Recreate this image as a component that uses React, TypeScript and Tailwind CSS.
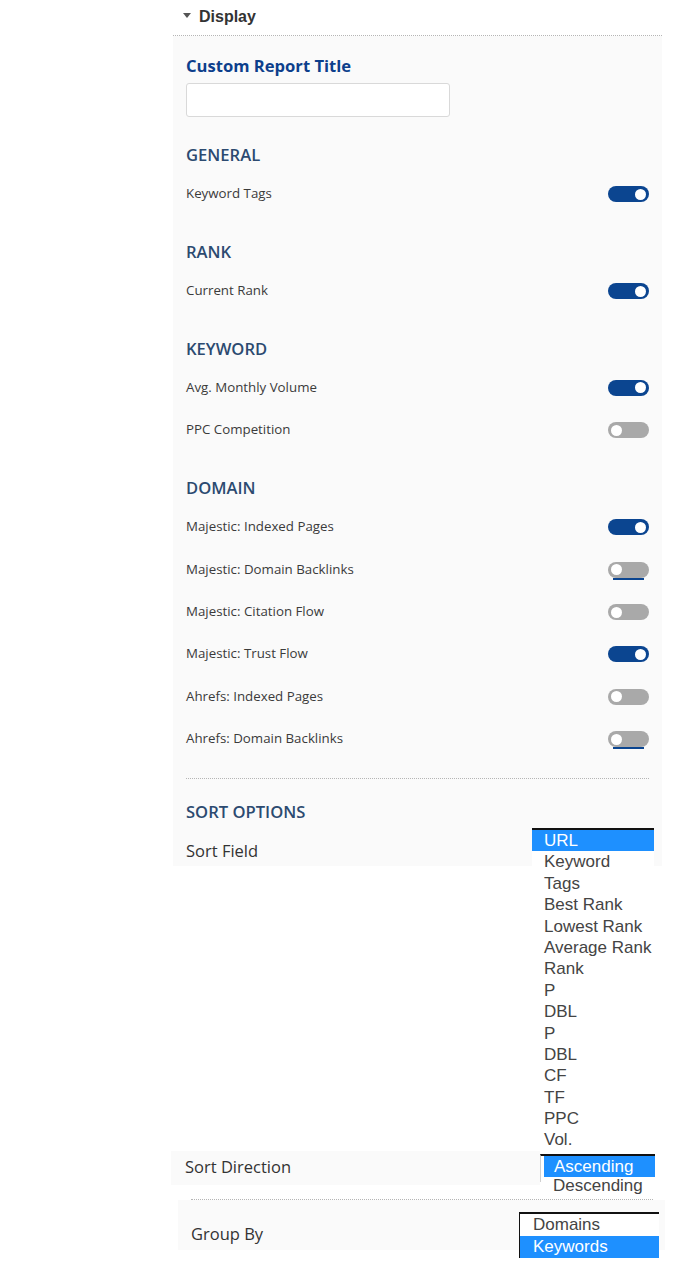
import React from "react";

const Toggle = ({ on, underline }: { on: boolean; underline?: boolean }) => (
  <div className="relative w-[41px] h-[16px] shrink-0">
    <div
      className={
        "absolute inset-0 rounded-full " + (on ? "bg-[#0b4590]" : "bg-[#a9a9a9]")
      }
    />
    <div
      className={
        "absolute top-[2.5px] w-[11px] h-[11px] rounded-full bg-white " +
        (on ? "right-[3px]" : "left-[3px]")
      }
    />
    {underline && (
      <div className="absolute left-[5px] right-[5px] bottom-[-2px] h-[2px] bg-[#0b4590]" />
    )}
  </div>
);

const Row = ({ label, on, underline }: { label: string; on: boolean; underline?: boolean }) => (
  <div className="flex items-center justify-between h-[42.4px]">
    <span className="text-[13.3px] text-[#3b3b3b]">{label}</span>
    <Toggle on={on} underline={underline} />
  </div>
);

const Heading = ({ children }: { children: React.ReactNode }) => (
  <div className="text-[16.6px] leading-[22px] font-semibold text-[#2c4a70] mt-[25.5px] mb-[7px]">
    {children}
  </div>
);

const sortFields = [
  "URL",
  "Keyword",
  "Tags",
  "Best Rank",
  "Lowest Rank",
  "Average Rank",
  "Rank",
  "P",
  "DBL",
  "P",
  "DBL",
  "CF",
  "TF",
  "PPC",
  "Vol.",
];

export default function App() {
  return (
    <div
      className="relative w-[683px] min-h-[1275px] bg-white"
      style={{ fontFamily: '"Open Sans", "Liberation Sans", sans-serif' }}
    >
      {/* Header */}
      <div className="ml-[173px] w-[489px] h-[36px] border-b border-dotted border-[#b5b5b5] flex items-center pl-[10px]">
        <svg width="8" height="6" viewBox="0 0 8 6" className="mr-[8px] mt-[-4px]">
          <polygon points="0,0 8,0 4,5" fill="#555" />
        </svg>
        <span
          className="text-[16px] font-bold text-[#333] mt-[-2px]"
          style={{ fontFamily: '"Liberation Sans", Arial, sans-serif' }}
        >
          Display
        </span>
      </div>

      {/* Panel */}
      <div className="ml-[173px] w-[489px] bg-[#fafafa] px-[13px] pt-[19px] pb-[4px]">
        <div className="text-[16.6px] leading-[22px] font-bold text-[#0d3f8c]">Custom Report Title</div>
        <div className="mt-[6px] w-[264px] h-[34px] bg-white border border-[#d9d9d9] rounded-[3px]" />

        <div className="mt-[27px] mb-[7px] text-[16.6px] leading-[22px] font-semibold text-[#2c4a70]">GENERAL</div>
        <Row label="Keyword Tags" on />

        <Heading>RANK</Heading>
        <Row label="Current Rank" on />

        <Heading>KEYWORD</Heading>
        <Row label="Avg. Monthly Volume" on />
        <Row label="PPC Competition" on={false} />

        <Heading>DOMAIN</Heading>
        <Row label="Majestic: Indexed Pages" on />
        <Row label="Majestic: Domain Backlinks" on={false} underline />
        <Row label="Majestic: Citation Flow" on={false} />
        <Row label="Majestic: Trust Flow" on />
        <Row label="Ahrefs: Indexed Pages" on={false} />
        <Row label="Ahrefs: Domain Backlinks" on={false} underline />

        <div className="mt-[18px] border-t border-dotted border-[#b5b5b5]" />

        <div className="mt-[22px] text-[16.6px] leading-[22px] font-semibold text-[#2c4a70]">SORT OPTIONS</div>
        <div className="mt-[17px] text-[16.5px] leading-[22px] text-[#333]">Sort Field</div>
      </div>

      {/* Sort Direction row */}
      <div className="mt-[285px] ml-[171px] w-[369px] h-[34px] bg-[#fafafa] flex items-center pl-[14px]">
        <span className="text-[16.5px] text-[#333] mt-[-2px]">Sort Direction</span>
      </div>

      <div className="mt-[14px] ml-[191px] w-[462px] border-t border-dotted border-[#b5b5b5]" />

      {/* Group By row */}
      <div className="ml-[178px] w-[487px] h-[50px] bg-[#fafafa] pl-[13px] pt-[23px]">
        <div className="text-[16.5px] leading-[22px] text-[#333]">Group By</div>
      </div>

      {/* Sort Field list (open) */}
      <div
        className="absolute left-[532px] top-[828px] w-[122px] bg-white border-t-2 border-[#111]"
        style={{ fontFamily: '"Liberation Sans", Arial, sans-serif' }}
      >
        {sortFields.map((f, i) => (
          <div
            key={i}
            className={
              "h-[21.4px] leading-[21.4px] pl-[12px] text-[17px] whitespace-nowrap " +
              (i === 0 ? "bg-[#1e90ff] text-white" : "text-[#444]")
            }
          >
            {f}
          </div>
        ))}
      </div>

      {/* Sort Direction list */}
      <div
        className="absolute left-[540px] top-[1154px] w-[115px]"
        style={{ fontFamily: '"Liberation Sans", Arial, sans-serif' }}
      >
        <div className="border-t-2 border-[#111] border-l border-l-[#d0d0d0] h-[28px] pl-[3px]">
          <div className="h-[21px] leading-[21px] bg-[#1e90ff] text-white text-[17px] pl-[10px]">Ascending</div>
        </div>
        <div className="mt-[-7px] h-[21px] leading-[21px] text-[#444] text-[17px] pl-[13px]">Descending</div>
      </div>

      {/* Group By list */}
      <div
        className="absolute left-[519px] top-[1212px] w-[140px] border-t-2 border-l border-[#111] bg-white"
        style={{ fontFamily: '"Liberation Sans", Arial, sans-serif' }}
      >
        <div className="h-[21.5px] leading-[21.5px] text-[#444] text-[17px] pl-[13px]">Domains</div>
        <div className="h-[22px] leading-[22px] bg-[#1e90ff] text-white text-[17px] pl-[13px]">Keywords</div>
      </div>
    </div>
  );
}
